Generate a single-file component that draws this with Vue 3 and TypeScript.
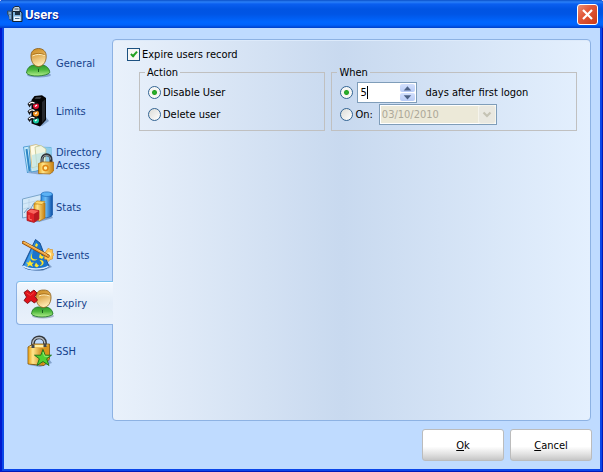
<script setup lang="ts">
import { ref } from 'vue'

interface Tab {
  id: string
  label: string
}

const tabs: Tab[] = [
  { id: 'general', label: 'General' },
  { id: 'limits', label: 'Limits' },
  { id: 'directory', label: 'Directory Access' },
  { id: 'stats', label: 'Stats' },
  { id: 'events', label: 'Events' },
  { id: 'expiry', label: 'Expiry' },
  { id: 'ssh', label: 'SSH' },
]

const activeTab = ref('expiry')
const expire = ref(true)
const action = ref<'disable' | 'delete'>('disable')
const when = ref<'days' | 'date'>('days')
const days = ref('5')
const date = ref('03/10/2010')

function step(by: number) {
  days.value = String(Math.max(0, (Number(days.value) || 0) + by))
}
</script>

<template>
  <div class="window">
    <header class="titlebar">
      <svg class="app-icon" viewBox="0 0 16 16" aria-hidden="true">
        <path d="M5 6 L6 2 L8 0.500 H12 L13 2 V6 Z" fill="#c9d8e4" stroke="#1b2b3c" />
        <path d="M7.500 3 H11.500" stroke="#3c4c5c" />
        <path d="M0.500 5 H5 V14 H3 L2 10 L0.500 8 Z" fill="#5b84ab" stroke="#2a4a6c" />
        <path d="M2 7 H4 M3 9 V13" stroke="#b4cfe4" />
        <path d="M5.500 5.500 H14 L15 7 V15.500 H5.500 Z" fill="#7fb4dc" stroke="#14222f" />
        <path d="M8 5.500 H13 V9 H8 Z" fill="#1d3042" />
        <path d="M7 10.500 H13.500 V15 H7 Z" fill="#eef5fb" />
        <path d="M8 12.500 H12.500" stroke="#466a8a" />
      </svg>
      <h1 class="title">Users</h1>
      <button class="close" type="button" aria-label="Close">
        <svg viewBox="0 0 19 19" aria-hidden="true">
          <path d="M5 5 L14 14 M14 5 L5 14" stroke="#fff" stroke-width="2.2" />
        </svg>
      </button>
    </header>

    <main class="content">
      <nav class="tabs" role="tablist" aria-label="User settings">
        <button
          v-for="tab in tabs"
          :key="tab.id"
          class="tab"
          :class="{ active: tab.id === activeTab }"
          type="button"
          role="tab"
          :aria-selected="tab.id === activeTab"
          @click="activeTab = tab.id"
        >
          <svg class="tab-icon" viewBox="0 0 32 32" aria-hidden="true">
            <defs>
              <linearGradient :id="tab.id + '-green'" x1="0" y1="0" x2="0" y2="1">
                <stop offset="0" stop-color="#2e9a2c" />
                <stop offset="0.45" stop-color="#4fb83e" />
                <stop offset="1" stop-color="#b4f08e" />
              </linearGradient>
              <linearGradient :id="tab.id + '-skin'" x1="0" y1="0" x2="0.3" y2="1">
                <stop offset="0" stop-color="#c98a1c" />
                <stop offset="0.4" stop-color="#dca549" />
                <stop offset="1" stop-color="#ffe9b0" />
              </linearGradient>
              <linearGradient :id="tab.id + '-gold'" x1="0" y1="0" x2="1" y2="0">
                <stop offset="0" stop-color="#e9a51f" />
                <stop offset="0.3" stop-color="#ffe68c" />
                <stop offset="1" stop-color="#c77e0c" />
              </linearGradient>
              <linearGradient :id="tab.id + '-blue'" x1="0" y1="0" x2="1" y2="0">
                <stop offset="0" stop-color="#2d8ce0" />
                <stop offset="0.4" stop-color="#6cbcf6" />
                <stop offset="1" stop-color="#0c4fa8" />
              </linearGradient>
            </defs>

            <g v-if="tab.id === 'general'">
              <ellipse cx="17" cy="28" rx="12" ry="2.5" fill="#5a7ba8" opacity="0.6" />
              <path d="M4.500 26 C5 21 8 18.500 12 18 H20 C25 18.500 27.500 22 27.800 25.500 C25 29.500 7 30.500 4.500 26 Z" :fill="'url(#general-green)'" stroke="#1c7421" stroke-width="0.800" />
              <path d="M12.500 18 L16.500 23 L20.500 18 Z" fill="#3c9b36" />
              <path d="M16.500 22 V25" stroke="#175f1c" />
              <path d="M9 10 C8.500 4.500 12 1.500 16.500 1.500 C21 1.500 24.500 4.500 24.200 10 C24 15.500 20.500 19.500 16.500 19.500 C12.500 19.500 9.300 15.500 9 10 Z" :fill="'url(#general-skin)'" stroke="#8a5a12" stroke-width="0.800" />
              <path d="M10.500 9 C14 7 19 7 22.800 8.500" fill="none" stroke="#fff0c0" />
              <path d="M10.500 7.500 C14 6 19 6 22.500 7.500" fill="none" stroke="#a36b15" stroke-width="0.800" />
            </g>

            <g v-else-if="tab.id === 'limits'">
              <path d="M12 29 L20 31 L27 26 L24 22 Z" fill="#5a7ba8" opacity="0.6" />
              <path d="M9.500 5 L12.500 1 L20 0.300 L24 3 V25 L18 31.500 L9.500 28.500 Z" fill="#050506" />
              <path d="M20 7 L23 4.500 V24 L20 28 Z" fill="#26282c" />
              <path d="M12.500 4 L14 2 H19.500 L18 4 Z" fill="#3b3d42" />
              <circle cx="14" cy="11" r="3" fill="#e01030" />
              <circle cx="14" cy="18.500" r="3" fill="#f0921e" />
              <circle cx="14" cy="25.500" r="3" fill="#17c7a0" />
              <g fill="#17171a">
                <path d="M5.500 9 C8 5 13 6 16 8.500 L9 10 L7.500 12.500 Z" />
                <path d="M5.500 16.500 C8 12.500 13 13.500 16 16 L9 17.500 L7.500 20 Z" />
                <path d="M5.500 24 C8 20 13 21 16 23.500 L9 25 L7.500 27 Z" />
              </g>
              <path d="M7 9 C9 7 11 7 12.500 8.300 M7 16.500 C9 14.500 11 14.500 12.500 15.800 M7 24 C9 22 11 22 12.500 23.300 M13 11.500 L15 10 M13 19 L15 17.500 M13 26 L15 24.500" fill="none" stroke="#fff" stroke-width="1.300" />
            </g>

            <g v-else-if="tab.id === 'directory'">
              <path d="M6 30 L17 31.500 L31 30 L30 27 L8 27 Z" fill="#5a7ba8" opacity="0.5" />
              <path d="M1.500 4 L8 3 L10 25 L5.500 30 Z" fill="#c5ebfc" stroke="#3b8fca" stroke-width="0.800" />
              <path d="M4.500 6 L7.500 28" stroke="#2d86c6" stroke-width="2" />
              <path d="M7 4 L29 4.500 L29 25 L9 29 Z" fill="#d9f1fb" stroke="#4c9acb" />
              <path d="M20 4 L30 4.500 L28 24 L19 26 Z" fill="#8fcdea" />
              <path d="M8 3 L14 1.500 L18 3 L19 22 L10 25 Z" fill="#fffbe6" stroke="#c8b26c" stroke-width="0.700" />
              <path d="M13 4 L19 2.500 L24 6 L23 22 L15 24 Z" fill="#f1f5df" stroke="#b8bd86" stroke-width="0.700" />
              <path d="M10 12 L23 9 L22 25 L10.500 28.500 Z" fill="#b9e2e4" opacity="0.7" />
              <path d="M20 20 V17 C20 10 29 10 29 16.500 V20" fill="none" stroke="#30343a" stroke-width="3" />
              <path d="M20 19 V17 C20 11 28.500 11 28.500 16.500" fill="none" stroke="#aab4bd" stroke-width="0.900" />
              <path d="M16.500 20.500 L20 19 H31.500 V28 L28 31 L16.500 30.500 Z" :fill="'url(#directory-gold)'" stroke="#a5660a" stroke-width="0.700" />
              <circle cx="23.500" cy="25" r="2.500" fill="#fff0a8" stroke="#e08612" stroke-width="1.500" />
            </g>

            <g v-else-if="tab.id === 'stats'">
              <path d="M8 31 L17 31 L31 27 L29 24 L6 28 Z" fill="#5a7ba8" opacity="0.6" />
              <path d="M0.500 8 L21 3 V23 L0.500 27 Z" fill="#d3e8f8" stroke="#7aa5ca" />
              <path d="M2 22 L6 17 L8 19 L12 12 L15 13 L20 8" fill="none" stroke="#6f9cc4" />
              <path d="M1 13 L20 8.500 M1 18 L20 13 M7 8 V26" stroke="#aecbe2" stroke-width="0.600" />
              <path d="M19 3.500 V25 C21 28 28 27 30.500 24 V3 Z" :fill="'url(#stats-blue)'" stroke="#1456a4" stroke-width="0.700" />
              <ellipse cx="24.800" cy="3.200" rx="5.600" ry="2.300" fill="#5cb2f5" stroke="#1c6cbc" stroke-width="0.700" />
              <path d="M12 13 V27 L17.500 30 L23 27 V12 Z" :fill="'url(#stats-gold)'" stroke="#b57310" stroke-width="0.700" />
              <path d="M12 12.500 L15 10 L23 10.500 L20 13.500 Z" fill="#ffd86a" stroke="#c98c18" stroke-width="0.700" />
              <path d="M5 20.500 L9 18 L17 19.500 V28 L12 31.500 L5 29.500 Z" fill="#de2228" stroke="#a3141a" stroke-width="0.700" />
              <path d="M5.500 20.500 L9 18.500 L16.500 20 L12 23 Z" fill="#f8665e" />
              <path d="M12 23 L16.800 20.200 V28 L12 31 Z" fill="#b81820" />
              <path d="M7 24 V28 L10 29" fill="none" stroke="#ff7468" />
            </g>

            <g v-else-if="tab.id === 'events'">
              <path d="M5 30 L20 32 L30 28 L27 25 Z" fill="#5a7ba8" opacity="0.6" />
              <path d="M13.500 0.500 L0.800 27 C4 32 22 32.500 27 27.500 L18 4 Z" fill="#1a74cc" stroke="#0a3d82" stroke-width="0.800" />
              <path d="M13.500 2 L9 20 L5 27.500 L2.500 26.500 Z" fill="#3f9ce8" />
              <path d="M1.200 27 C7 31 21 31 26.500 27.200" fill="none" stroke="#d8eaff" stroke-width="1.600" />
              <g fill="#ffe629">
                <path d="M10.500 14 C8.500 19 11 21.500 15.500 20 C12 24 5.500 20 10.500 14 Z" />
                <path d="M17.500 21 C23 20.500 23 26.500 17.500 27 C20.500 25 20.500 23.500 17.500 21 Z" />
                <path d="M8 21 L9.300 23.500 H12 L10 25.300 L11 28 L8 26.300 L5 28 L6 25.300 L4 23.500 H6.800 Z" />
                <path d="M14 23.500 L15.500 25.500 L17 26.500 L15 28.500 L12.500 27 Z" />
                <path d="M18 14.500 L20 17 L22 17.500 L20 20 L17 18.500 Z" />
                <path d="M14 4 L16 5.500 L15 8 L13 7 Z" />
              </g>
              <path d="M26.500 9 L28 10.500 L30.500 10.500 L30.500 13.500 L32 15.500 L30.500 17.500 L30.500 20 L28 20.500 L26.500 22.500 L25 20.500 L22.500 20 L22.500 17.500 L21 15.500 L23 13.500 Z" fill="#ffc85a" stroke="#d48f20" stroke-width="0.600" />
              <circle cx="27" cy="15.500" r="2.200" fill="#fff3b5" />
              <path d="M1.500 3.500 L26 17" stroke="#8d4a0c" stroke-width="3.400" stroke-linecap="round" />
              <path d="M1.500 3.500 L26 17" stroke="#f0a035" stroke-width="1.900" stroke-linecap="round" />
              <path d="M2 3 L25 15.600" stroke="#ffdc8c" stroke-width="0.700" />
            </g>

            <g v-else-if="tab.id === 'expiry'">
              <ellipse cx="21" cy="29" rx="11" ry="2.500" fill="#7b8ea8" opacity="0.6" />
              <path d="M9.500 27 C10 22.500 12 20.500 16 20 H24 C28 20.500 30.500 23 31 27 C28 31 12 31 9.500 27 Z" :fill="'url(#expiry-green)'" stroke="#1c7421" stroke-width="0.800" />
              <path d="M17 20 L20.500 24 L24 20 Z" fill="#3c9b36" />
              <path d="M20.500 23 V26" stroke="#175f1c" />
              <path d="M14 11 C13.500 6 16 3 21.500 3 C27 3 29.200 6 29 11 C28.700 16.500 25.500 20.500 21.500 20.500 C17.500 20.500 14.300 16.500 14 11 Z" :fill="'url(#expiry-skin)'" stroke="#8a5a12" stroke-width="0.800" />
              <path d="M17 9 C20 7.500 24 7.500 27.500 9" fill="none" stroke="#fff0c0" />
              <path d="M17 7.700 C20 6.300 24 6.300 27.500 7.700" fill="none" stroke="#a36b15" stroke-width="0.800" />
              <path d="M2 5.500 L5.500 3 L8.500 5.500 L12 3 L15 6 L12.800 9.500 L15.500 13 L12.500 16 L9 13.500 L5.500 16.500 L2 13.500 L4.500 10 Z" fill="#e0121b" stroke="#7a0c10" stroke-width="0.900" />
              <path d="M4.500 5.800 L8.500 8.500 L12 5.500" fill="none" stroke="#f4473c" />
            </g>

            <g v-else>
              <path d="M7 30 L18 32 L30 28 L27 24 Z" fill="#5a7ba8" opacity="0.6" />
              <path d="M11 13 V8 C11.500 0.500 23 0.500 23 8 V12" fill="none" stroke="#34383e" stroke-width="3.800" />
              <path d="M10.800 12 V8 C11.500 1 22.500 1 22.800 8 V11" fill="none" stroke="#b6bdc4" stroke-width="1.500" />
              <path d="M6 12 L11 9 H27.500 V24 L22 30.500 L6 29 Z" fill="#d9951c" stroke="#79500c" stroke-width="0.800" />
              <path d="M6.500 12.500 H21 V29.800 L6.500 28.600 Z" :fill="'url(#ssh-gold)'" />
              <path d="M7 12 L11.500 9.700 H26.500 L21 12.500 Z" fill="#fff0a6" />
              <path d="M11 13 V9.500 M23 12 V8.500" stroke="#42464c" stroke-width="3" />
              <path d="M21 14.500 L23.200 20.200 H29.500 L24.700 23.800 L27 30.500 L21 26.500 L15 30.500 L17.300 23.800 L12.500 20.200 H18.800 Z" fill="#4fd032" stroke="#1a6e17" stroke-width="0.900" />
              <path d="M21 17 L22.500 21.200 L26.500 21.500" fill="none" stroke="#a4f587" stroke-width="0.800" />
            </g>
          </svg>
          <span class="tab-label">{{ tab.label }}</span>
        </button>
      </nav>

      <section class="panel">
        <label class="option">
          <input v-model="expire" class="check" type="checkbox" />
          Expire users record
        </label>

        <div class="groups">
          <fieldset class="group">
            <legend>Action</legend>
            <div class="line">
              <label class="option">
                <input v-model="action" class="radio" type="radio" name="action" value="disable" />
                Disable User
              </label>
            </div>
            <div class="line">
              <label class="option">
                <input v-model="action" class="radio" type="radio" name="action" value="delete" />
                Delete user
              </label>
            </div>
          </fieldset>

          <fieldset class="group wide">
            <legend>When</legend>
            <div class="line">
              <input v-model="when" class="radio" type="radio" name="when" value="days" aria-label="After a number of days" />
              <span class="spinner">
                <input id="days" v-model="days" class="days" type="text" inputmode="numeric" />
                <span class="caret" aria-hidden="true"></span>
                <span class="steps">
                  <button type="button" aria-label="More days" @click="step(1)">
                    <svg viewBox="0 0 14 8" aria-hidden="true"><path d="M7 2 L10.500 6 H3.500 Z" fill="#4d6185" /></svg>
                  </button>
                  <button type="button" aria-label="Fewer days" @click="step(-1)">
                    <svg viewBox="0 0 14 8" aria-hidden="true"><path d="M7 6 L10.500 2 H3.500 Z" fill="#4d6185" /></svg>
                  </button>
                </span>
              </span>
              <label class="suffix" for="days">days after first logon</label>
            </div>
            <div class="line">
              <label class="option">
                <input v-model="when" class="radio" type="radio" name="when" value="date" />
                On:
              </label>
              <span class="date">
                <select v-model="date" aria-label="Expiry date" :disabled="when !== 'date'">
                  <option>03/10/2010</option>
                </select>
                <svg class="arrow" viewBox="0 0 16 17" aria-hidden="true">
                  <path d="M4.500 6.500 L8 10 L11.500 6.500" fill="none" stroke="#c5c3b4" stroke-width="2.200" />
                </svg>
              </span>
            </div>
          </fieldset>
        </div>
      </section>
    </main>

    <footer class="actions">
      <button class="command" type="button"><span><u>O</u>k</span></button>
      <button class="command" type="button"><span><u>C</u>ancel</span></button>
    </footer>
  </div>
</template>

<style>
body {
  background: #fff;
}
</style>

<style scoped>
.window {
  box-sizing: border-box;
  display: flex;
  flex-direction: column;
  min-height: 100vh;
  overflow: hidden;
  padding: 0 3px 3px 4px;
  border-radius: 3px 3px 0 0;
  background: #0a46e8;
  box-shadow: inset 2px 0 #0019cf, inset -1px -1px #0019b8;
  color: #000;
  font: 11px/13px "DejaVu Sans Condensed", "DejaVu Sans", sans-serif;
}

button,
input,
select {
  margin: 0;
  padding: 0;
  border: 0;
  color: inherit;
  font: inherit;
}

svg {
  display: block;
}

.titlebar {
  display: flex;
  align-items: center;
  gap: 2px;
  height: 28px;
  margin: 0 -3px 0 -4px;
  padding: 0 5px 0 7px;
  background: linear-gradient(#0a50c8 0, #2a80f8 2px, #0a5ff0 4px, #0054e3 9px, #0055e5 14px, #0066ff 22px, #0062fb 25px, #003fc8 28px);
}

.app-icon {
  width: 16px;
  height: 16px;
}

.title {
  flex: 1;
  margin: 0;
  padding-top: 2px;
  color: #fff;
  font: bold 13px/18px Roboto, sans-serif;
  text-shadow: 1px 1px #0a1883;
}

.close {
  box-sizing: border-box;
  width: 21px;
  height: 21px;
  border: 1px solid #fff;
  border-radius: 3px;
  background: linear-gradient(135deg, #ec8f74, #e2593a 40%, #cc3a14);
}

.content {
  display: flex;
  flex: 1;
  padding: 11px 9px 0 12px;
  background: #bfdbff;
}

.tabs {
  z-index: 1;
  display: flex;
  flex-direction: column;
  gap: 4px;
  width: 97px;
  margin-right: -1px;
  padding-top: 2px;
}

.tab {
  box-sizing: border-box;
  display: flex;
  align-items: center;
  gap: 2px;
  height: 44px;
  padding-left: 5px;
  border: 1px solid transparent;
  border-right: 0;
  border-radius: 4px 0 0 4px;
  background: none;
  color: #15428b;
  text-align: left;
}

.tab.active {
  border-color: #8db2e3;
  border-top-color: #7cc4ef;
  background: linear-gradient(#f3f8fe, #e3edf9 50%, #e9f1fb);
  background-clip: padding-box;
  box-shadow: inset 0 1px #fff;
}

.tab-icon {
  flex: none;
  width: 32px;
  height: 32px;
}

.tab-label {
  width: 52px;
}

.panel {
  flex: 1;
  padding: 8px 13px 12px 14px;
  border: 1px solid #8db2e3;
  border-radius: 4px;
  background: linear-gradient(90deg, #e9f1fb, #c8d9ef 48%, #e4f0fe);
  box-shadow: inset 0 1px #ddeafa;
}

.option {
  display: inline-flex;
  align-items: center;
  gap: 2px;
}

.check,
.radio {
  appearance: none;
  box-sizing: border-box;
  flex: none;
  width: 13px;
  height: 13px;
  border: 1px solid #1c5180;
  background: linear-gradient(135deg, #dcdcd7, #fff);
}

.check:checked {
  position: relative;
  background: #f6f6f4;
}

.check:checked::after {
  content: "";
  position: absolute;
  top: 1px;
  left: 4px;
  width: 2px;
  height: 5px;
  border: solid #21a121;
  border-width: 0 2px 2px 0;
  transform: rotate(42deg);
}

.radio {
  border-color: #336492;
  border-radius: 50%;
}

.radio:checked {
  background: radial-gradient(circle, #2fb52f 0, #21a121 2px, #f4f4f0 3px, #fff);
}

.groups {
  display: flex;
  gap: 6px;
  margin: 2px 0 0 12px;
}

.group {
  box-sizing: border-box;
  flex: 185;
  min-width: 0;
  height: 65px;
  margin: 0;
  padding: 2px 0 0 8px;
  border: 1px solid #c0c0c0;
}

.group.wide {
  flex: 247;
}

legend {
  margin-left: -3px;
  padding: 0 2px;
}

.line {
  display: flex;
  align-items: center;
  height: 22px;
}

.spinner {
  position: relative;
  box-sizing: border-box;
  display: flex;
  width: 60px;
  height: 21px;
  margin-left: 4px;
  padding: 1px;
  border: 1px solid #7f9db9;
  background: #fff;
}

.days {
  flex: 1;
  min-width: 0;
  padding-left: 1px;
  background: none;
  outline: 0;
}

.caret {
  position: absolute;
  top: 3px;
  left: 9px;
  width: 1px;
  height: 13px;
  background: #000;
}

.steps {
  display: flex;
  flex-direction: column;
  gap: 1px;
}

.steps button {
  width: 15px;
  height: 8px;
  border-radius: 2px;
  background: linear-gradient(#d3e0fd, #b8cbf6);
}

.suffix {
  margin-left: 8px;
}

.date {
  position: relative;
  display: flex;
  margin-left: 6px;
}

.date select {
  appearance: none;
  box-sizing: border-box;
  width: 118px;
  height: 21px;
  padding: 0 20px 0 2px;
  border: 1px solid #7f9db9;
  border-radius: 0;
  background: #ece9d8;
  box-shadow: inset 0 0 0 1px #fff;
  color: #aca899;
  opacity: 1;
}

.arrow {
  position: absolute;
  top: 2px;
  right: 2px;
  width: 16px;
  height: 17px;
  border-radius: 2px;
  background: #e9e8e0;
  box-shadow: 0 0 0 1px #f5f4ec;
  pointer-events: none;
}

.actions {
  display: flex;
  justify-content: flex-end;
  gap: 6px;
  padding: 8px;
  background: #bfdbff;
}

.command {
  box-sizing: border-box;
  width: 82px;
  height: 32px;
  border: 1px solid #bcbcbc;
  border-radius: 3px;
  background: linear-gradient(#fff 0, #fff 55%, #e2e2e2 80%, #c6c6c6);
}
</style>
